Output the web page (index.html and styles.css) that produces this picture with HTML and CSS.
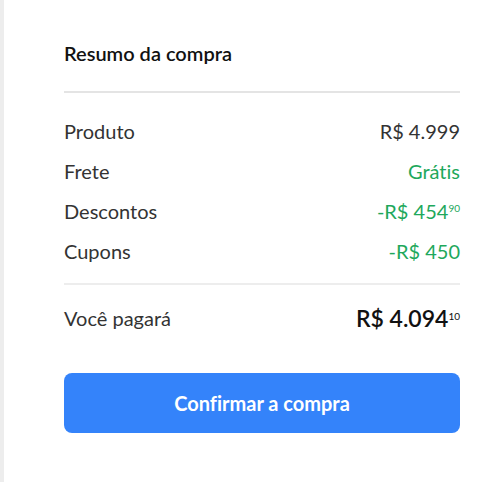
FILE: index.html
```html
<!DOCTYPE html>
<html lang="pt-BR">
<head>
<meta charset="utf-8">
<meta name="viewport" content="width=device-width, initial-scale=1">
<title>Resumo da compra</title>
<link rel="stylesheet" href="styles.css">
</head>
<body>
<main class="summary">
  <h1 class="title">Resumo da compra</h1>
  <dl class="costs">
    <div class="row"><dt>Produto</dt><dd>R$ 4.999</dd></div>
    <div class="row"><dt>Frete</dt><dd class="saving">Grátis</dd></div>
    <div class="row"><dt>Descontos</dt><dd class="saving">-R$ 454<sup>90</sup></dd></div>
    <div class="row"><dt>Cupons</dt><dd class="saving">-R$ 450</dd></div>
    <div class="row total"><dt>Você pagará</dt><dd class="amount">R$ 4.094<sup>10</sup></dd></div>
  </dl>
  <button class="confirm" type="button">Confirmar a compra</button>
</main>
</body>
</html>
```
FILE: styles.css
```css
* {
  box-sizing: border-box;
}

body {
  margin: 0;
  background: #fff;
  color: #333;
  font-family: Lato, "Liberation Sans", sans-serif;
  font-size: 20px;
  font-weight: 400;
  font-variant-ligatures: none;
  line-height: 24px;
}

.summary {
  min-height: 100vh;
  padding: 41px 40px 48px 60px;
  border-left: 4px solid #ededed;
}

.title {
  margin: 0;
  padding-bottom: 26px;
  border-bottom: 2px solid #e4e4e4;
  color: #111;
  font-size: 20px;
  font-weight: 600;
}

.costs {
  margin: 26px 0 0;
}

.row {
  display: flex;
  justify-content: space-between;
  margin-bottom: 16px;
}

dd {
  margin: 0;
}

.saving {
  color: #1ea85c;
}

sup {
  font-size: 10px;
  line-height: 10px;
  vertical-align: 7px;
}

.total {
  margin: 20px 0 0;
  padding-top: 21px;
  border-top: 2px solid #ededed;
}

.amount {
  color: #111;
  font-size: 23px;
  font-weight: 600;
}

.amount sup {
  font-weight: 400;
}

.confirm {
  width: 100%;
  height: 60px;
  margin-top: 43px;
  border: 0;
  border-radius: 8px;
  background: #3483fa;
  color: #fff;
  font-family: inherit;
  font-size: 20px;
  font-weight: 700;
  font-variant-ligatures: none;
  line-height: 24px;
}
```
